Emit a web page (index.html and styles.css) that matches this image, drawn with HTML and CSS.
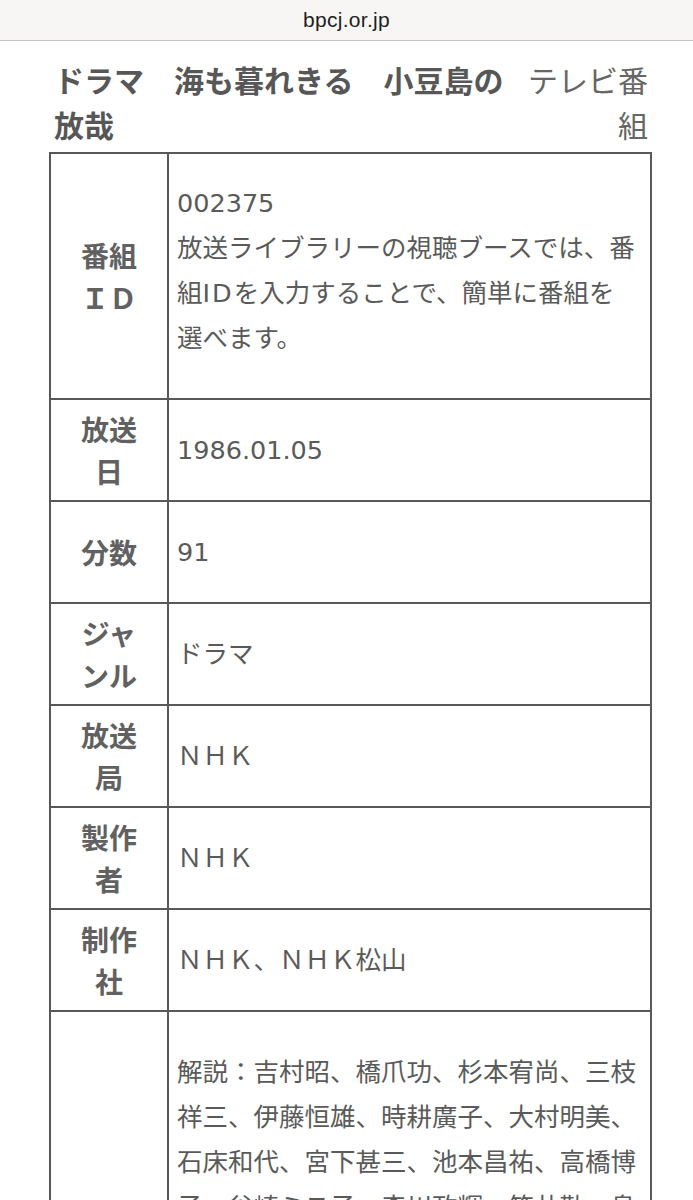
FILE: index.html
```html
<!DOCTYPE html>
<html lang="ja">
<head>
<meta charset="utf-8">
<title>bpcj.or.jp</title>
<link rel="stylesheet" href="styles.css">
</head>
<body>
<header class="urlbar"><span class="url">bpcj.or.jp</span></header>
<main class="page">
  <h1 class="title">
    <span class="title-main">ドラマ　海も暮れきる　小豆島の放哉</span>
    <span class="title-cat">テレビ番組</span>
  </h1>
  <table class="info">
    <tr class="row-id">
      <th>番組ＩＤ</th>
      <td>002375<br>放送ライブラリーの視聴ブースでは、番組<span class="latin">ID</span>を入力することで、簡単に番組を選べます。</td>
    </tr>
    <tr class="row"><th>放送日</th><td>1986.01.05</td></tr>
    <tr class="row"><th>分数</th><td>91</td></tr>
    <tr class="row"><th>ジャンル</th><td>ドラマ</td></tr>
    <tr class="row"><th>放送局</th><td>ＮＨＫ</td></tr>
    <tr class="row"><th>製作者</th><td>ＮＨＫ</td></tr>
    <tr class="row"><th>制作社</th><td>ＮＨＫ、ＮＨＫ松山</td></tr>
    <tr class="row-cast">
      <th>出演者</th>
      <td>解説：吉村昭、橋爪功、杉本宥尚、三枝祥三、伊藤恒雄、時耕廣子、大村明美、石床和代、宮下甚三、池本昌祐、高橋博子、谷崎ミス子、森川政輝、笠井勤、島</td>
    </tr>
  </table>
</main>
</body>
</html>
```

FILE: styles.css
```css
html, body {
  margin: 0;
  padding: 0;
  background: #ffffff;
}

body {
  font-family: "Noto Sans CJK JP", "Noto Sans", sans-serif;
  color: #555555;
}

.urlbar {
  height: 40px;
  background: #f8f6f5;
  border-bottom: 1px solid #c4c4c4;
  display: flex;
  align-items: center;
  justify-content: center;
}

.url {
  font-family: "Liberation Sans", Arial, sans-serif;
  font-size: 21px;
  letter-spacing: 0.3px;
  color: #1e1e1e;
}

.page {
  padding: 0 0 0 49px;
  width: 603px;
}

.title {
  margin: 16px 0 5px 0;
  padding: 0 4px 0 5px;
  display: flex;
  font-size: 30px;
  line-height: 45px;
  font-weight: bold;
  color: #575757;
}

.title-main {
  flex: 1;
  min-width: 0;
}

.title-cat {
  width: 124px;
  text-align: right;
  font-weight: normal;
  color: #666666;
}

.info {
  border-collapse: collapse;
  border: 2px solid #585858;
}

.info th,
.info td {
  border: 2px solid #585858;
  vertical-align: middle;
}

.info th {
  width: 78px;
  padding: 0 19px;
  font-size: 28px;
  line-height: 42px;
  font-weight: bold;
  text-align: center;
  color: #616161;
}

.info td {
  width: 461px;
  padding: 0 12px 0 8px;
  font-family: "DejaVu Sans", "Noto Sans CJK JP", sans-serif;
  font-size: 25.5px;
  line-height: 45px;
  color: #5a5a5a;
}

.latin {
  letter-spacing: 2px;
}

.row {
  height: 102px;
}

.row-id td {
  padding-top: 27px;
  padding-bottom: 37px;
}

.row-cast td {
  padding-top: 38px;
  padding-bottom: 320px;
}
```
